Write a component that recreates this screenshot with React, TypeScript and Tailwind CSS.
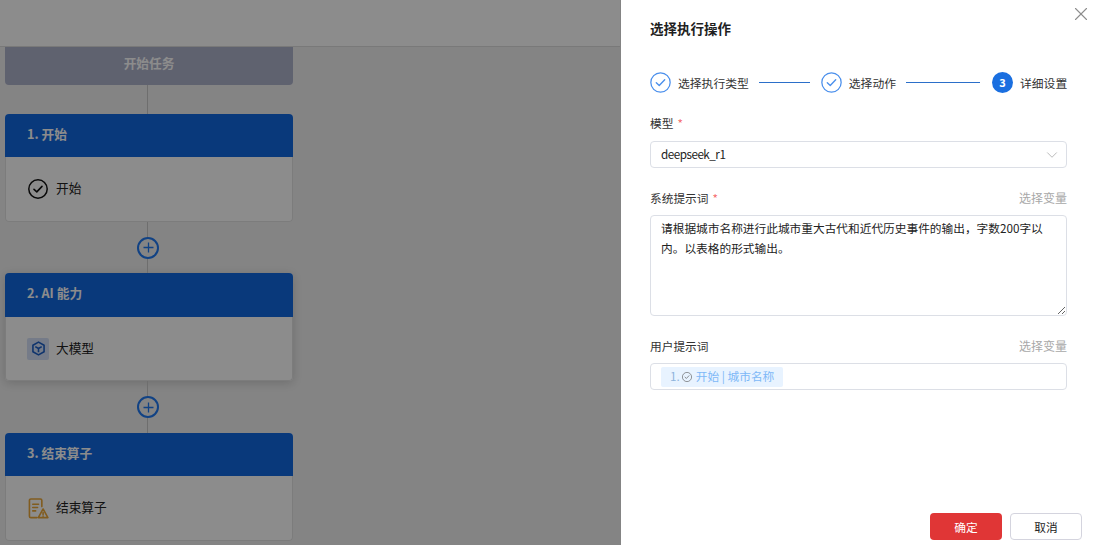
import type { ReactNode } from "react";
import { ChevronDown, X } from "lucide-react";

const FONT = "font-['Noto_Sans_CJK_SC','Noto_Sans',sans-serif]";

function CheckCircle({ size, weight = 1.2, className }: { size: number; weight?: number; className?: string }) {
  return (
    <svg width={size} height={size} viewBox="0 0 20 20" fill="none" className={className}>
      <circle cx="10" cy="10" r="9.200" stroke="currentColor" strokeWidth={weight} />
      <path d="M6 10.300l2.800 2.600L14 7.400" stroke="currentColor" strokeWidth={weight + 0.1} strokeLinecap="round" strokeLinejoin="round" />
    </svg>
  );
}

function ModelIcon() {
  return (
    <div className="flex h-[22px] w-[22px] items-center justify-center rounded-[2px] bg-[#d5e1f7]">
      <svg width="15" height="15" viewBox="0 0 14 14" fill="none" stroke="#1d5fc7" strokeWidth="1.500" strokeLinejoin="round">
        <path d="M7 1l5.200 3v6L7 13l-5.200-3V4z" />
        <path d="M4 5.200L7 7l3-1.800M7 7v3.400" />
      </svg>
    </div>
  );
}

function EndIcon() {
  return (
    <svg width="21" height="21" viewBox="0 0 22 22" fill="none" stroke="#eba83a" strokeWidth="1.700" strokeLinecap="round" strokeLinejoin="round">
      <path d="M9.500 20.500H3A1.500 1.500 0 0 1 1.500 19V2.500A1.500 1.500 0 0 1 3 1h10a1.500 1.500 0 0 1 1.500 1.500V9" />
      <path d="M5 6.500h6M5 10h5M5 13.500h3" />
      <path d="M15.800 11.500l5 9h-10z" />
      <path d="M15.800 15.200v2M15.800 18.900v.1" />
    </svg>
  );
}

function Connector({ height }: { height: number }) {
  return <div className="ml-[142px] w-px bg-[#c9c9c9]" style={{ height }} />;
}

function AddConnector({ height }: { height: number }) {
  return (
    <div className="relative ml-[142px] flex w-px items-center bg-[#c9c9c9]" style={{ height }}>
      <div className="absolute left-[-10px] flex h-[22px] w-[22px] items-center justify-center rounded-full border-2 border-[#1f78f0] bg-[#f1f1f1]">
        <svg width="11" height="11" viewBox="0 0 11 11" stroke="#1f78f0" strokeWidth="1.300">
          <path d="M5.500 0.500v10M0.500 5.500h10" />
        </svg>
      </div>
    </div>
  );
}

function FlowCard({ title, icon, label, raised, headH = "h-[43px]" }: { title: string; icon: ReactNode; label: string; raised?: boolean; headH?: string }) {
  return (
    <div className={`flex h-[108px] w-[288px] flex-col rounded-[4px] bg-white ${raised ? "shadow-[0_2px_10px_rgba(0,0,0,0.16)]" : ""}`}>
      <div className={`${headH} flex shrink-0 items-center rounded-t-[4px] bg-[#1269e0] pb-[4px] pl-[22px] text-[12.700px] font-bold text-white`}>{title}</div>
      <div className="flex flex-1 items-center gap-[7px] rounded-b-[4px] border border-t-0 border-[#e2e2e2] pl-[21px] text-[12.700px] text-[#222]">
        <span className="flex w-[22px] justify-center">{icon}</span>
        <span className="pb-[2px]">{label}</span>
      </div>
    </div>
  );
}

function StepDone({ label }: { label: string }) {
  return (
    <div className="flex shrink-0 items-center gap-[7px]">
      <CheckCircle size={21} className="text-[#4a8fec]" />
      <span className="whitespace-nowrap text-[11.800px]">{label}</span>
    </div>
  );
}

function FieldLabel({ text, required, action }: { text: string; required?: boolean; action?: boolean }) {
  return (
    <div className="flex h-[18px] items-center justify-between pb-[2px]">
      <span className="text-[#333]">
        {text}
        {required && <span className="ml-1 text-[#f56c6c]">*</span>}
      </span>
      {action && <span className="text-[12px] text-[#a8a8a8]">选择变量</span>}
    </div>
  );
}

export default function App() {
  return (
    <div className={`${FONT} relative flex h-[545px] w-[1093px] overflow-hidden bg-[#f0f0f0] text-[11.700px]`}>
      {/* Canvas behind the mask */}
      <div className="w-[620px] shrink-0">
        <div className="h-[47px] border-b border-[#dcdcdc] bg-[#fff]" />
        <div className="ml-[5px] flex flex-col">
          <div className="flex h-[38px] w-[288px] items-center justify-center rounded-b-[4px] bg-[#adb2cb] pb-[6px] text-[12.700px] font-bold text-white">开始任务</div>
          <Connector height={29} />
          <FlowCard title="1. 开始" label="开始" icon={<CheckCircle size={20} weight={1.5} className="text-[#111]" />} />
          <AddConnector height={51} />
          <FlowCard title="2. AI 能力" label="大模型" raised headH="h-[44px]" icon={<ModelIcon />} />
          <AddConnector height={52} />
          <FlowCard title="3. 结束算子" label="结束算子" icon={<EndIcon />} />
        </div>
      </div>

      {/* Mask */}
      <div className="absolute inset-0 bg-black/45" />

      {/* Drawer */}
      <div className="absolute bottom-0 right-0 top-0 flex w-[472px] flex-col bg-white pl-[29px] pr-[26px] text-[#333]">
        <button className="absolute right-[1px] top-[3px] text-[#8d8d8d]">
          <X size={22} strokeWidth={1.200} />
        </button>
        <h1 className="mt-[19px] h-[18px] text-[13.500px] font-bold leading-[18px] text-[#1f1f1f]">选择执行操作</h1>

        <div className="mt-[35px] flex h-[21px] items-center">
          <StepDone label="选择执行类型" />
          <div className="ml-[10px] mr-[11px] h-px w-[51px] shrink-0 bg-[#2b6fc9]" />
          <StepDone label="选择动作" />
          <div className="ml-[10px] mr-[12px] h-px w-[74px] shrink-0 bg-[#2b6fc9]" />
          <div className="flex shrink-0 items-center gap-[7px]">
            <span className="flex h-[21px] w-[21px] items-center justify-center rounded-full bg-[#1a6fe0] text-[11px] font-bold text-white">3</span>
            <span className="whitespace-nowrap text-[11.800px]">详细设置</span>
          </div>
        </div>

        <div className="mt-[22px]">
          <FieldLabel text="模型" required />
          <div className="mt-[8px] flex h-[27px] items-center justify-between rounded-[4px] border border-[#dcdfe6] pl-[10px] pr-[5px]">
            <span className="pb-[2px] tracking-[-0.5px] text-[#222]">deepseek_r1</span>
            <ChevronDown size={18} strokeWidth={1.200} className="text-[#b3b3b3]" />
          </div>
        </div>

        <div className="mt-[22px]">
          <FieldLabel text="系统提示词" required action />
          <textarea
            readOnly
            className="mt-[7px] block h-[101px] w-full resize-y rounded-[4px] border border-[#dcdfe6] px-[10px] py-[2px] text-[11.700px] leading-[20px] text-[#222] outline-none"
            value="请根据城市名称进行此城市重大古代和近代历史事件的输出，字数200字以内。以表格的形式输出。"
          />
        </div>

        <div className="mt-[22px]">
          <FieldLabel text="用户提示词" action />
          <div className="mt-[7px] flex h-[27px] items-center rounded-[4px] border border-[#dcdfe6] pl-[10px]">
            <span className="flex h-[20px] items-center gap-[4px] rounded-[2px] bg-[#e8f3ff] px-[9px] pb-[2px] text-[#7db8f7]">
              <span className="text-[#8fb4dc]">1.</span>
              <CheckCircle size={10} className="ml-[-2px] mt-[2px] text-[#555]" />
              <span>开始 | 城市名称</span>
            </span>
          </div>
        </div>

        <div className="mb-[5px] mr-[-15px] mt-auto flex justify-end gap-[8px]">
          <button className="h-[27px] w-[72px] rounded-[4px] bg-[#e03636] text-white">确定</button>
          <button className="h-[27px] w-[72px] rounded-[4px] border border-[#d4d4de] bg-white text-[#222]">取消</button>
        </div>
      </div>
    </div>
  );
}
